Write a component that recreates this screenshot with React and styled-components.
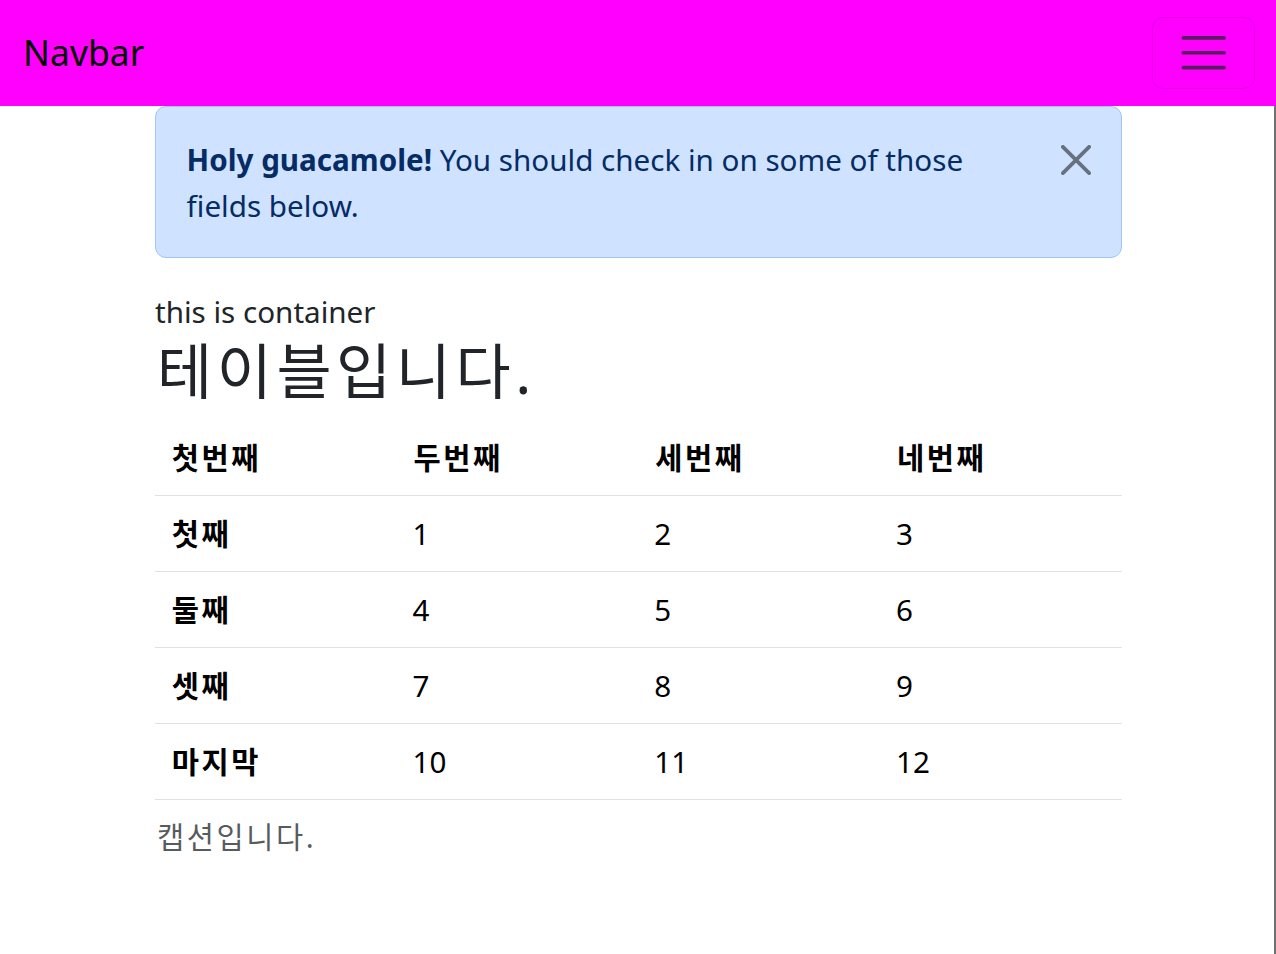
import React from 'react';
import styled, { createGlobalStyle } from 'styled-components';

const GlobalStyle = createGlobalStyle`
  * {
    box-sizing: border-box;
  }

  body {
    margin: 0;
    font-family: "Noto Sans", "Noto Sans CJK KR", sans-serif;
    font-size: 29.6px;
    line-height: 1.5;
    color: #212529;
    background: #fff;
  }
`;

const Page = styled.div`
  display: flex;
  flex-direction: column;
  min-height: 100vh;
`;

const Navbar = styled.nav`
  height: 106px;
  flex-shrink: 0;
  background: #ff00ff;
  display: flex;
  align-items: center;
  justify-content: space-between;
  padding: 0 21px 0 23px;
`;

const Brand = styled.a`
  font-size: 35.5px;
  line-height: 1.5;
  color: #000;
  text-decoration: none;
`;

const Toggler = styled.button`
  width: 103px;
  height: 72px;
  padding: 0;
  display: flex;
  align-items: center;
  justify-content: center;
  background: transparent;
  border: 1px solid rgba(0, 0, 0, 0.1);
  border-radius: 11px;
  cursor: pointer;
`;

const Main = styled.main`
  flex: 1;
  box-shadow: inset -2px 0 0 #707070;
`;

const Container = styled.div`
  width: 967px;
  margin-left: 155px;
`;

const Alert = styled.div`
  position: relative;
  padding: 30.4px 89px 28px 30.6px;
  margin-bottom: 29.6px;
  background: #cfe2ff;
  border: 1px solid #9ec5fe;
  border-radius: 11px;
  color: #052c65;
  line-height: 46px;

  strong {
    font-weight: 700;
  }
`;

const CloseButton = styled.button`
  position: absolute;
  top: 38px;
  right: 30px;
  width: 30px;
  height: 30px;
  padding: 0;
  border: 0;
  background: transparent;
  opacity: 0.5;
  cursor: pointer;
  display: flex;
`;

const Lead = styled.div`
  padding-top: 2px;
`;

const Title = styled.h1`
  margin: 0 0 11px;
  font-size: 60px;
  font-weight: 400;
  line-height: 75px;
  letter-spacing: 4.5px;
  text-indent: 2px;
  color: #212529;
`;

const Table = styled.table`
  width: 100%;
  table-layout: fixed;
  border-collapse: collapse;
  caption-side: bottom;
  color: #000;
`;

const Caption = styled.caption`
  padding: 14.8px 0 14.8px 2px;
  text-align: left;
  letter-spacing: 2.5px;
  color: rgba(33, 37, 41, 0.75);
`;

const Cell = styled.td`
  padding: 15.3px 14.8px 15.3px ${p => (p.$bold ? '16.8px' : '15.8px')};
  text-align: left;
  vertical-align: top;
  border-bottom: 1px solid #dee2e6;
  font-weight: ${p => (p.$bold ? 700 : 400)};
  letter-spacing: ${p => (p.$bold ? '2.5px' : '0')};
`;

const headers = ['첫번째', '두번째', '세번째', '네번째'];

const rows = [
  ['첫째', 1, 2, 3],
  ['둘째', 4, 5, 6],
  ['셋째', 7, 8, 9],
  ['마지막', 10, 11, 12],
];

const TogglerIcon = () => (
  <svg width="55.5" height="55.5" viewBox="0 0 30 30">
    <path
      d="M4 7h22M4 15h22M4 23h22"
      stroke="rgba(33,37,41,0.75)"
      strokeWidth="2"
      strokeLinecap="round"
      strokeMiterlimit="10"
    />
  </svg>
);

const CloseIcon = () => (
  <svg width="30" height="30" viewBox="0 0 16 16">
    <path
      fill="#000"
      d="M.293.293a1 1 0 0 1 1.414 0L8 6.586 14.293.293a1 1 0 1 1 1.414 1.414L9.414 8l6.293 6.293a1 1 0 0 1-1.414 1.414L8 9.414l-6.293 6.293a1 1 0 0 1-1.414-1.414L6.586 8 .293 1.707a1 1 0 0 1 0-1.414"
    />
  </svg>
);

export default function App() {
  return (
    <>
      <GlobalStyle />
      <Page>
        <Navbar>
          <Brand href="#">Navbar</Brand>
          <Toggler aria-label="Toggle navigation">
            <TogglerIcon />
          </Toggler>
        </Navbar>
        <Main>
          <Container>
            <Alert role="alert">
              <strong>Holy guacamole!</strong> You should check in on some of those fields below.
              <CloseButton aria-label="Close">
                <CloseIcon />
              </CloseButton>
            </Alert>
            <Lead>this is container</Lead>
            <Title>테이블입니다.</Title>
            <Table>
              <Caption>캡션입니다.</Caption>
              <thead>
                <tr>
                  {headers.map(h => (
                    <Cell as="th" key={h} $bold>
                      {h}
                    </Cell>
                  ))}
                </tr>
              </thead>
              <tbody>
                {rows.map(([label, ...nums]) => (
                  <tr key={label}>
                    <Cell as="th" $bold>
                      {label}
                    </Cell>
                    {nums.map(n => (
                      <Cell key={n}>{n}</Cell>
                    ))}
                  </tr>
                ))}
              </tbody>
            </Table>
          </Container>
        </Main>
      </Page>
    </>
  );
}
